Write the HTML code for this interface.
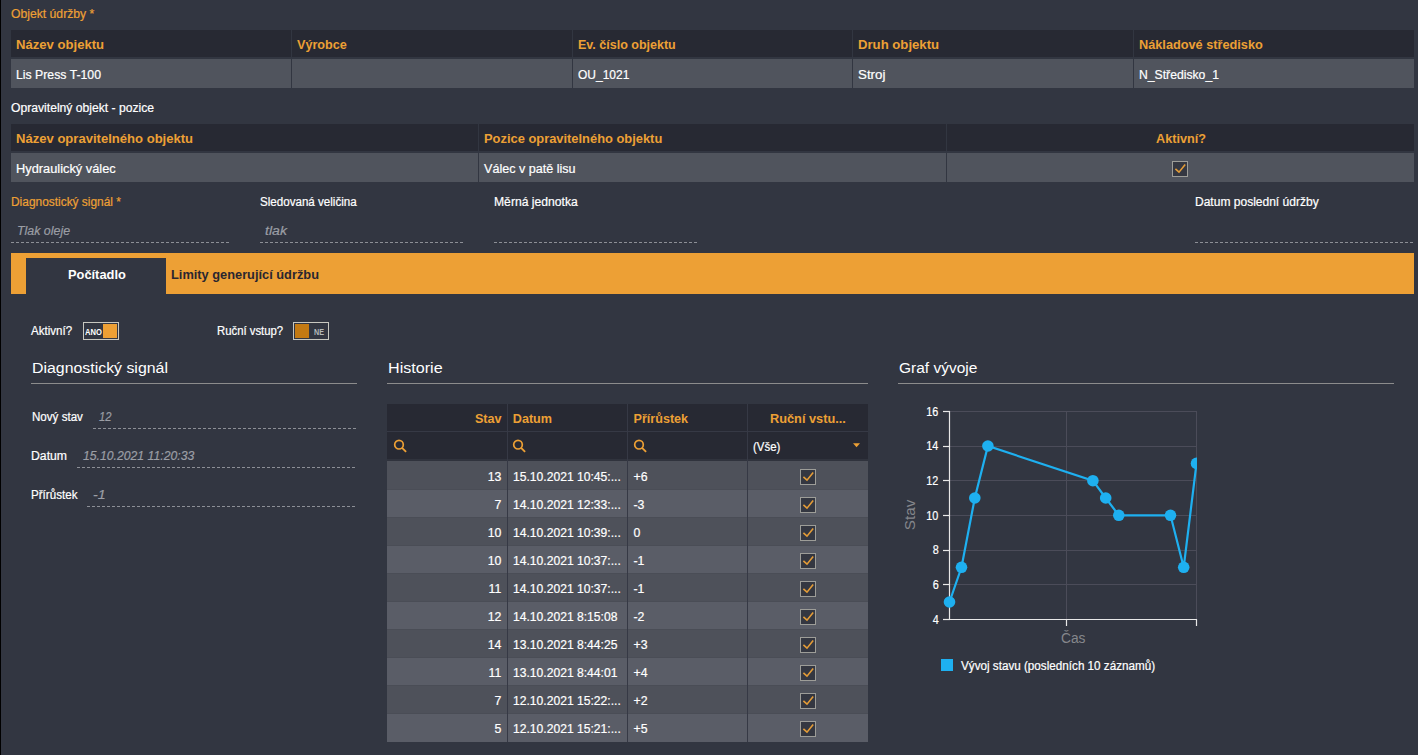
<!DOCTYPE html>
<html><head><meta charset="utf-8"><style>
html,body{margin:0;padding:0;}
body{width:1418px;height:755px;overflow:hidden;background:#323641;position:relative;font-family:"Liberation Sans",sans-serif;}
.t{position:absolute;white-space:nowrap;line-height:1;}
.r{position:absolute;}
</style></head><body>
<div class="r" style="left:0px;top:0px;width:1px;height:755px;background:#000;"></div>
<div id="t0" class="t" style="left:11px;transform-origin:0 0;transform:scaleX(0.9905);top:8.19px;font-size:12.3px;color:#eda035;font-weight:400;font-style:normal;-webkit-text-stroke:0.2px currentColor;">Objekt údržby *</div>
<div class="r" style="left:11px;top:30px;width:1403px;height:27px;background:#272933;"></div>
<div class="r" style="left:11px;top:59px;width:1403px;height:29px;background:#50545d;"></div>
<div class="r" style="left:291px;top:30px;width:1px;height:58px;background:#323641;"></div>
<div class="r" style="left:572px;top:30px;width:1px;height:58px;background:#323641;"></div>
<div class="r" style="left:852px;top:30px;width:1px;height:58px;background:#323641;"></div>
<div class="r" style="left:1133px;top:30px;width:1px;height:58px;background:#323641;"></div>
<div class="r" style="left:11px;top:57px;width:1403px;height:2px;background:#323641;"></div>
<div id="t1" class="t" style="left:16px;transform-origin:0 0;transform:scaleX(1.0405);top:39.13px;font-size:12.6px;color:#eda035;font-weight:700;font-style:normal;">Název objektu</div>
<div id="t2" class="t" style="left:297px;transform-origin:0 0;transform:scaleX(1.0000);top:39.13px;font-size:12.6px;color:#eda035;font-weight:700;font-style:normal;">Výrobce</div>
<div id="t3" class="t" style="left:578px;transform-origin:0 0;transform:scaleX(0.9929);top:39.13px;font-size:12.6px;color:#eda035;font-weight:700;font-style:normal;">Ev. číslo objektu</div>
<div id="t4" class="t" style="left:858px;transform-origin:0 0;transform:scaleX(1.0442);top:39.13px;font-size:12.6px;color:#eda035;font-weight:700;font-style:normal;">Druh objektu</div>
<div id="t5" class="t" style="left:1139px;transform-origin:0 0;transform:scaleX(1.0107);top:39.13px;font-size:12.6px;color:#eda035;font-weight:700;font-style:normal;">Nákladové středisko</div>
<div id="t6" class="t" style="left:16px;transform-origin:0 0;transform:scaleX(0.9976);top:69.19px;font-size:12.3px;color:#fff;font-weight:400;font-style:normal;-webkit-text-stroke:0.2px currentColor;">Lis Press T-100</div>
<div id="t7" class="t" style="left:578px;transform-origin:0 0;transform:scaleX(0.9750);top:69.19px;font-size:12.3px;color:#fff;font-weight:400;font-style:normal;-webkit-text-stroke:0.2px currentColor;">OU_1021</div>
<div id="t8" class="t" style="left:858px;transform-origin:0 0;transform:scaleX(1.0833);top:69.19px;font-size:12.3px;color:#fff;font-weight:400;font-style:normal;-webkit-text-stroke:0.2px currentColor;">Stroj</div>
<div id="t9" class="t" style="left:1139px;transform-origin:0 0;transform:scaleX(0.9911);top:69.19px;font-size:12.3px;color:#fff;font-weight:400;font-style:normal;-webkit-text-stroke:0.2px currentColor;">N_Středisko_1</div>
<div id="t10" class="t" style="left:11px;transform-origin:0 0;transform:scaleX(1.0121);top:102.34px;font-size:12.0px;color:#fff;font-weight:400;font-style:normal;-webkit-text-stroke:0.2px currentColor;">Opravitelný objekt - pozice</div>
<div class="r" style="left:11px;top:124px;width:1403px;height:27px;background:#272933;"></div>
<div class="r" style="left:11px;top:153px;width:1403px;height:29px;background:#50545d;"></div>
<div class="r" style="left:11px;top:151px;width:1403px;height:2px;background:#323641;"></div>
<div class="r" style="left:478px;top:124px;width:1px;height:58px;background:#323641;"></div>
<div class="r" style="left:946px;top:124px;width:1px;height:58px;background:#323641;"></div>
<div id="t11" class="t" style="left:16px;transform-origin:0 0;transform:scaleX(1.0371);top:133.13px;font-size:12.6px;color:#eda035;font-weight:700;font-style:normal;">Název opravitelného objektu</div>
<div id="t12" class="t" style="left:484px;transform-origin:0 0;transform:scaleX(1.0230);top:133.13px;font-size:12.6px;color:#eda035;font-weight:700;font-style:normal;">Pozice opravitelného objektu</div>
<div id="t13" class="t" style="left:1155.7px;transform-origin:0 0;transform:scaleX(1.0061);top:133.13px;font-size:12.6px;color:#eda035;font-weight:700;font-style:normal;">Aktivní?</div>
<div id="t14" class="t" style="left:16px;transform-origin:0 0;transform:scaleX(1.0421);top:163.19px;font-size:12.3px;color:#fff;font-weight:400;font-style:normal;-webkit-text-stroke:0.2px currentColor;">Hydraulický válec</div>
<div id="t15" class="t" style="left:484px;transform-origin:0 0;transform:scaleX(1.0225);top:163.19px;font-size:12.3px;color:#fff;font-weight:400;font-style:normal;-webkit-text-stroke:0.2px currentColor;">Válec v patě lisu</div>
<svg class="r" style="left:1172px;top:161px" width="16" height="16" viewBox="0 0 16 16"><rect x="0.5" y="0.5" width="15" height="15" fill="#343741" stroke="#9d9d98"/><path d="M3.4 7.8 L7 11.2 L13.2 3.6" fill="none" stroke="#e49c37" stroke-width="1.6"/></svg>
<div id="t16" class="t" style="left:11px;transform-origin:0 0;transform:scaleX(0.9690);top:196.19px;font-size:12.3px;color:#eda035;font-weight:400;font-style:normal;-webkit-text-stroke:0.2px currentColor;">Diagnostický signál *</div>
<div id="t17" class="t" style="left:260px;transform-origin:0 0;transform:scaleX(0.9431);top:196.19px;font-size:12.3px;color:#fff;font-weight:400;font-style:normal;-webkit-text-stroke:0.2px currentColor;">Sledovaná veličina</div>
<div id="t18" class="t" style="left:494px;transform-origin:0 0;transform:scaleX(0.9881);top:196.19px;font-size:12.3px;color:#fff;font-weight:400;font-style:normal;-webkit-text-stroke:0.2px currentColor;">Měrná jednotka</div>
<div id="t19" class="t" style="left:1195.4px;transform-origin:0 0;transform:scaleX(0.9778);top:196.19px;font-size:12.3px;color:#fff;font-weight:400;font-style:normal;-webkit-text-stroke:0.2px currentColor;">Datum poslední údržby</div>
<div id="t20" class="t" style="left:17px;transform-origin:0 0;transform:scaleX(1.0077);top:224.89px;font-size:12.3px;color:#9b9ea5;font-weight:400;font-style:italic;-webkit-text-stroke:0.2px currentColor;">Tlak oleje</div>
<div id="t21" class="t" style="left:264.5px;transform-origin:0 0;transform:scaleX(1.1474);top:224.89px;font-size:12.3px;color:#9b9ea5;font-weight:400;font-style:italic;-webkit-text-stroke:0.2px currentColor;">tlak</div>
<div class="r" style="left:11px;top:242px;width:219px;height:1px;background:repeating-linear-gradient(90deg,#8c8f96 0 3px,transparent 3px 5px);"></div>
<div class="r" style="left:260px;top:242px;width:204px;height:1px;background:repeating-linear-gradient(90deg,#8c8f96 0 3px,transparent 3px 5px);"></div>
<div class="r" style="left:494px;top:242px;width:203px;height:1px;background:repeating-linear-gradient(90deg,#8c8f96 0 3px,transparent 3px 5px);"></div>
<div class="r" style="left:1195px;top:242px;width:219px;height:1px;background:repeating-linear-gradient(90deg,#8c8f96 0 3px,transparent 3px 5px);"></div>
<div class="r" style="left:11px;top:253px;width:1403px;height:41px;background:#eda035;"></div>
<div class="r" style="left:26px;top:258px;width:140px;height:36px;background:#323641;"></div>
<div id="t22" class="t" style="left:67.7px;transform-origin:0 0;transform:scaleX(1.0196);top:268.53px;font-size:12.6px;color:#fff;font-weight:700;font-style:normal;">Počítadlo</div>
<div id="t23" class="t" style="left:170.6px;transform-origin:0 0;transform:scaleX(1.0166);top:268.53px;font-size:12.6px;color:#2a2630;font-weight:700;font-style:normal;">Limity generující údržbu</div>
<div id="t24" class="t" style="left:31.1px;transform-origin:0 0;transform:scaleX(0.9386);top:325.49px;font-size:12.3px;color:#fff;font-weight:400;font-style:normal;-webkit-text-stroke:0.2px currentColor;">Aktivní?</div>
<div class="r" style="left:83px;top:322px;width:36px;height:18px;background:transparent;box-sizing:border-box;border:1px solid #c8c8c0;"></div>
<div class="r" style="left:103px;top:324px;width:14px;height:14px;background:#eda035;"></div>
<div id="t25" class="t" style="left:85px;transform-origin:0 0;transform:scaleX(0.8947);top:327.70px;font-size:8.5px;color:#fff;font-weight:700;font-style:normal;">ANO</div>
<div id="t26" class="t" style="left:216.6px;transform-origin:0 0;transform:scaleX(0.9211);top:325.49px;font-size:12.3px;color:#fff;font-weight:400;font-style:normal;-webkit-text-stroke:0.2px currentColor;">Ruční vstup?</div>
<div class="r" style="left:293px;top:322px;width:36px;height:18px;background:transparent;box-sizing:border-box;border:1px solid #c8c8c0;"></div>
<div class="r" style="left:295px;top:324px;width:14px;height:14px;background:#c47a12;"></div>
<div id="t27" class="t" style="left:313.8px;transform-origin:0 0;transform:scaleX(0.8500);top:327.70px;font-size:8.5px;color:#b4baba;font-weight:700;font-style:normal;">NE</div>
<div id="t28" class="t" style="left:31.8px;transform-origin:0 0;transform:scaleX(1.0244);top:359.98px;font-size:15.5px;color:#fff;font-weight:400;font-style:normal;">Diagnostický signál</div>
<div id="t29" class="t" style="left:388px;transform-origin:0 0;transform:scaleX(1.0392);top:359.98px;font-size:15.5px;color:#fff;font-weight:400;font-style:normal;">Historie</div>
<div id="t30" class="t" style="left:898.5px;transform-origin:0 0;transform:scaleX(0.9987);top:359.98px;font-size:15.5px;color:#fff;font-weight:400;font-style:normal;">Graf vývoje</div>
<div class="r" style="left:31px;top:383px;width:326px;height:1px;background:#8c8c8c;"></div>
<div class="r" style="left:387px;top:383px;width:481px;height:1px;background:#8c8c8c;"></div>
<div class="r" style="left:898px;top:383px;width:496px;height:1px;background:#8c8c8c;"></div>
<div id="t31" class="t" style="left:31.6px;transform-origin:0 0;transform:scaleX(0.9426);top:411.09px;font-size:12.3px;color:#fff;font-weight:400;font-style:normal;-webkit-text-stroke:0.2px currentColor;">Nový stav</div>
<div id="t32" class="t" style="left:99.2px;transform-origin:0 0;transform:scaleX(0.9143);top:411.09px;font-size:12.3px;color:#9b9ea5;font-weight:400;font-style:italic;-webkit-text-stroke:0.2px currentColor;">12</div>
<div class="r" style="left:93px;top:428px;width:264px;height:1px;background:repeating-linear-gradient(90deg,#8c8f96 0 3px,transparent 3px 5px);"></div>
<div id="t33" class="t" style="left:31.4px;transform-origin:0 0;transform:scaleX(0.9943);top:449.89px;font-size:12.3px;color:#fff;font-weight:400;font-style:normal;-webkit-text-stroke:0.2px currentColor;">Datum</div>
<div id="t34" class="t" style="left:83.1px;transform-origin:0 0;transform:scaleX(0.9938);top:449.89px;font-size:12.3px;color:#9b9ea5;font-weight:400;font-style:italic;-webkit-text-stroke:0.2px currentColor;">15.10.2021 11:20:33</div>
<div class="r" style="left:77px;top:467px;width:280px;height:1px;background:repeating-linear-gradient(90deg,#8c8f96 0 3px,transparent 3px 5px);"></div>
<div id="t35" class="t" style="left:31.4px;transform-origin:0 0;transform:scaleX(0.9449);top:488.89px;font-size:12.3px;color:#fff;font-weight:400;font-style:normal;-webkit-text-stroke:0.2px currentColor;">Přírůstek</div>
<div id="t36" class="t" style="left:92.5px;transform-origin:0 0;transform:scaleX(1.1500);top:488.89px;font-size:12.3px;color:#9b9ea5;font-weight:400;font-style:italic;-webkit-text-stroke:0.2px currentColor;">-1</div>
<div class="r" style="left:87px;top:506px;width:270px;height:1px;background:repeating-linear-gradient(90deg,#8c8f96 0 3px,transparent 3px 5px);"></div>
<div class="r" style="left:387px;top:404px;width:481px;height:55px;background:#272933;"></div>
<div class="r" style="left:387px;top:431px;width:481px;height:1px;background:#363945;"></div>
<div class="r" style="left:387px;top:459px;width:481px;height:2px;background:#30333d;"></div>
<div class="r" style="left:387px;top:461px;width:481px;height:29px;background:#4e515a;"></div>
<div class="r" style="left:387px;top:490px;width:481px;height:28px;background:#5a5d67;"></div>
<div class="r" style="left:387px;top:489px;width:481px;height:1px;background:#4a4d56;"></div>
<div class="r" style="left:387px;top:518px;width:481px;height:28px;background:#4e515a;"></div>
<div class="r" style="left:387px;top:517px;width:481px;height:1px;background:#4a4d56;"></div>
<div class="r" style="left:387px;top:546px;width:481px;height:28px;background:#5a5d67;"></div>
<div class="r" style="left:387px;top:545px;width:481px;height:1px;background:#4a4d56;"></div>
<div class="r" style="left:387px;top:574px;width:481px;height:28px;background:#4e515a;"></div>
<div class="r" style="left:387px;top:573px;width:481px;height:1px;background:#4a4d56;"></div>
<div class="r" style="left:387px;top:602px;width:481px;height:28px;background:#5a5d67;"></div>
<div class="r" style="left:387px;top:601px;width:481px;height:1px;background:#4a4d56;"></div>
<div class="r" style="left:387px;top:630px;width:481px;height:28px;background:#4e515a;"></div>
<div class="r" style="left:387px;top:629px;width:481px;height:1px;background:#4a4d56;"></div>
<div class="r" style="left:387px;top:658px;width:481px;height:28px;background:#5a5d67;"></div>
<div class="r" style="left:387px;top:657px;width:481px;height:1px;background:#4a4d56;"></div>
<div class="r" style="left:387px;top:686px;width:481px;height:28px;background:#4e515a;"></div>
<div class="r" style="left:387px;top:685px;width:481px;height:1px;background:#4a4d56;"></div>
<div class="r" style="left:387px;top:714px;width:481px;height:28px;background:#5a5d67;"></div>
<div class="r" style="left:387px;top:713px;width:481px;height:1px;background:#4a4d56;"></div>
<div id="t37" class="t" style="right:916.7px;transform-origin:100% 0;transform:scaleX(1.0000);top:470.99px;font-size:12.3px;color:#fff;font-weight:400;font-style:normal;-webkit-text-stroke:0.2px currentColor;">13</div>
<div id="t38" class="t" style="left:513.3px;transform-origin:0 0;transform:scaleX(1.0000);top:470.99px;font-size:12.3px;color:#fff;font-weight:400;font-style:normal;-webkit-text-stroke:0.2px currentColor;transform:scaleX(0.985);">15.10.2021 10:45:...</div>
<div id="t39" class="t" style="left:633.5px;transform-origin:0 0;transform:scaleX(1.0000);top:470.99px;font-size:12.3px;color:#fff;font-weight:400;font-style:normal;-webkit-text-stroke:0.2px currentColor;">+6</div>
<svg class="r" style="left:800px;top:469px" width="16" height="16" viewBox="0 0 16 16"><rect x="0.5" y="0.5" width="15" height="15" fill="#343741" stroke="#9d9d98"/><path d="M3.4 7.8 L7 11.2 L13.2 3.6" fill="none" stroke="#e49c37" stroke-width="1.6"/></svg>
<div id="t40" class="t" style="right:916.7px;transform-origin:100% 0;transform:scaleX(1.0000);top:498.99px;font-size:12.3px;color:#fff;font-weight:400;font-style:normal;-webkit-text-stroke:0.2px currentColor;">7</div>
<div id="t41" class="t" style="left:513.3px;transform-origin:0 0;transform:scaleX(1.0000);top:498.99px;font-size:12.3px;color:#fff;font-weight:400;font-style:normal;-webkit-text-stroke:0.2px currentColor;transform:scaleX(0.985);">14.10.2021 12:33:...</div>
<div id="t42" class="t" style="left:633.5px;transform-origin:0 0;transform:scaleX(1.0000);top:498.99px;font-size:12.3px;color:#fff;font-weight:400;font-style:normal;-webkit-text-stroke:0.2px currentColor;">-3</div>
<svg class="r" style="left:800px;top:497px" width="16" height="16" viewBox="0 0 16 16"><rect x="0.5" y="0.5" width="15" height="15" fill="#343741" stroke="#9d9d98"/><path d="M3.4 7.8 L7 11.2 L13.2 3.6" fill="none" stroke="#e49c37" stroke-width="1.6"/></svg>
<div id="t43" class="t" style="right:916.7px;transform-origin:100% 0;transform:scaleX(1.0000);top:526.99px;font-size:12.3px;color:#fff;font-weight:400;font-style:normal;-webkit-text-stroke:0.2px currentColor;">10</div>
<div id="t44" class="t" style="left:513.3px;transform-origin:0 0;transform:scaleX(1.0000);top:526.99px;font-size:12.3px;color:#fff;font-weight:400;font-style:normal;-webkit-text-stroke:0.2px currentColor;transform:scaleX(0.985);">14.10.2021 10:39:...</div>
<div id="t45" class="t" style="left:633.5px;transform-origin:0 0;transform:scaleX(1.0000);top:526.99px;font-size:12.3px;color:#fff;font-weight:400;font-style:normal;-webkit-text-stroke:0.2px currentColor;">0</div>
<svg class="r" style="left:800px;top:525px" width="16" height="16" viewBox="0 0 16 16"><rect x="0.5" y="0.5" width="15" height="15" fill="#343741" stroke="#9d9d98"/><path d="M3.4 7.8 L7 11.2 L13.2 3.6" fill="none" stroke="#e49c37" stroke-width="1.6"/></svg>
<div id="t46" class="t" style="right:916.7px;transform-origin:100% 0;transform:scaleX(1.0000);top:554.99px;font-size:12.3px;color:#fff;font-weight:400;font-style:normal;-webkit-text-stroke:0.2px currentColor;">10</div>
<div id="t47" class="t" style="left:513.3px;transform-origin:0 0;transform:scaleX(1.0000);top:554.99px;font-size:12.3px;color:#fff;font-weight:400;font-style:normal;-webkit-text-stroke:0.2px currentColor;transform:scaleX(0.985);">14.10.2021 10:37:...</div>
<div id="t48" class="t" style="left:633.5px;transform-origin:0 0;transform:scaleX(1.0000);top:554.99px;font-size:12.3px;color:#fff;font-weight:400;font-style:normal;-webkit-text-stroke:0.2px currentColor;">-1</div>
<svg class="r" style="left:800px;top:553px" width="16" height="16" viewBox="0 0 16 16"><rect x="0.5" y="0.5" width="15" height="15" fill="#343741" stroke="#9d9d98"/><path d="M3.4 7.8 L7 11.2 L13.2 3.6" fill="none" stroke="#e49c37" stroke-width="1.6"/></svg>
<div id="t49" class="t" style="right:916.7px;transform-origin:100% 0;transform:scaleX(1.0000);top:582.99px;font-size:12.3px;color:#fff;font-weight:400;font-style:normal;-webkit-text-stroke:0.2px currentColor;">11</div>
<div id="t50" class="t" style="left:513.3px;transform-origin:0 0;transform:scaleX(1.0000);top:582.99px;font-size:12.3px;color:#fff;font-weight:400;font-style:normal;-webkit-text-stroke:0.2px currentColor;transform:scaleX(0.985);">14.10.2021 10:37:...</div>
<div id="t51" class="t" style="left:633.5px;transform-origin:0 0;transform:scaleX(1.0000);top:582.99px;font-size:12.3px;color:#fff;font-weight:400;font-style:normal;-webkit-text-stroke:0.2px currentColor;">-1</div>
<svg class="r" style="left:800px;top:581px" width="16" height="16" viewBox="0 0 16 16"><rect x="0.5" y="0.5" width="15" height="15" fill="#343741" stroke="#9d9d98"/><path d="M3.4 7.8 L7 11.2 L13.2 3.6" fill="none" stroke="#e49c37" stroke-width="1.6"/></svg>
<div id="t52" class="t" style="right:916.7px;transform-origin:100% 0;transform:scaleX(1.0000);top:610.99px;font-size:12.3px;color:#fff;font-weight:400;font-style:normal;-webkit-text-stroke:0.2px currentColor;">12</div>
<div id="t53" class="t" style="left:513.3px;transform-origin:0 0;transform:scaleX(1.0000);top:610.99px;font-size:12.3px;color:#fff;font-weight:400;font-style:normal;-webkit-text-stroke:0.2px currentColor;transform:scaleX(0.985);">14.10.2021 8:15:08</div>
<div id="t54" class="t" style="left:633.5px;transform-origin:0 0;transform:scaleX(1.0000);top:610.99px;font-size:12.3px;color:#fff;font-weight:400;font-style:normal;-webkit-text-stroke:0.2px currentColor;">-2</div>
<svg class="r" style="left:800px;top:609px" width="16" height="16" viewBox="0 0 16 16"><rect x="0.5" y="0.5" width="15" height="15" fill="#343741" stroke="#9d9d98"/><path d="M3.4 7.8 L7 11.2 L13.2 3.6" fill="none" stroke="#e49c37" stroke-width="1.6"/></svg>
<div id="t55" class="t" style="right:916.7px;transform-origin:100% 0;transform:scaleX(1.0000);top:638.99px;font-size:12.3px;color:#fff;font-weight:400;font-style:normal;-webkit-text-stroke:0.2px currentColor;">14</div>
<div id="t56" class="t" style="left:513.3px;transform-origin:0 0;transform:scaleX(1.0000);top:638.99px;font-size:12.3px;color:#fff;font-weight:400;font-style:normal;-webkit-text-stroke:0.2px currentColor;transform:scaleX(0.985);">13.10.2021 8:44:25</div>
<div id="t57" class="t" style="left:633.5px;transform-origin:0 0;transform:scaleX(1.0000);top:638.99px;font-size:12.3px;color:#fff;font-weight:400;font-style:normal;-webkit-text-stroke:0.2px currentColor;">+3</div>
<svg class="r" style="left:800px;top:637px" width="16" height="16" viewBox="0 0 16 16"><rect x="0.5" y="0.5" width="15" height="15" fill="#343741" stroke="#9d9d98"/><path d="M3.4 7.8 L7 11.2 L13.2 3.6" fill="none" stroke="#e49c37" stroke-width="1.6"/></svg>
<div id="t58" class="t" style="right:916.7px;transform-origin:100% 0;transform:scaleX(1.0000);top:666.99px;font-size:12.3px;color:#fff;font-weight:400;font-style:normal;-webkit-text-stroke:0.2px currentColor;">11</div>
<div id="t59" class="t" style="left:513.3px;transform-origin:0 0;transform:scaleX(1.0000);top:666.99px;font-size:12.3px;color:#fff;font-weight:400;font-style:normal;-webkit-text-stroke:0.2px currentColor;transform:scaleX(0.985);">13.10.2021 8:44:01</div>
<div id="t60" class="t" style="left:633.5px;transform-origin:0 0;transform:scaleX(1.0000);top:666.99px;font-size:12.3px;color:#fff;font-weight:400;font-style:normal;-webkit-text-stroke:0.2px currentColor;">+4</div>
<svg class="r" style="left:800px;top:665px" width="16" height="16" viewBox="0 0 16 16"><rect x="0.5" y="0.5" width="15" height="15" fill="#343741" stroke="#9d9d98"/><path d="M3.4 7.8 L7 11.2 L13.2 3.6" fill="none" stroke="#e49c37" stroke-width="1.6"/></svg>
<div id="t61" class="t" style="right:916.7px;transform-origin:100% 0;transform:scaleX(1.0000);top:694.99px;font-size:12.3px;color:#fff;font-weight:400;font-style:normal;-webkit-text-stroke:0.2px currentColor;">7</div>
<div id="t62" class="t" style="left:513.3px;transform-origin:0 0;transform:scaleX(1.0000);top:694.99px;font-size:12.3px;color:#fff;font-weight:400;font-style:normal;-webkit-text-stroke:0.2px currentColor;transform:scaleX(0.985);">12.10.2021 15:22:...</div>
<div id="t63" class="t" style="left:633.5px;transform-origin:0 0;transform:scaleX(1.0000);top:694.99px;font-size:12.3px;color:#fff;font-weight:400;font-style:normal;-webkit-text-stroke:0.2px currentColor;">+2</div>
<svg class="r" style="left:800px;top:693px" width="16" height="16" viewBox="0 0 16 16"><rect x="0.5" y="0.5" width="15" height="15" fill="#343741" stroke="#9d9d98"/><path d="M3.4 7.8 L7 11.2 L13.2 3.6" fill="none" stroke="#e49c37" stroke-width="1.6"/></svg>
<div id="t64" class="t" style="right:916.7px;transform-origin:100% 0;transform:scaleX(1.0000);top:722.99px;font-size:12.3px;color:#fff;font-weight:400;font-style:normal;-webkit-text-stroke:0.2px currentColor;">5</div>
<div id="t65" class="t" style="left:513.3px;transform-origin:0 0;transform:scaleX(1.0000);top:722.99px;font-size:12.3px;color:#fff;font-weight:400;font-style:normal;-webkit-text-stroke:0.2px currentColor;transform:scaleX(0.985);">12.10.2021 15:21:...</div>
<div id="t66" class="t" style="left:633.5px;transform-origin:0 0;transform:scaleX(1.0000);top:722.99px;font-size:12.3px;color:#fff;font-weight:400;font-style:normal;-webkit-text-stroke:0.2px currentColor;">+5</div>
<svg class="r" style="left:800px;top:721px" width="16" height="16" viewBox="0 0 16 16"><rect x="0.5" y="0.5" width="15" height="15" fill="#343741" stroke="#9d9d98"/><path d="M3.4 7.8 L7 11.2 L13.2 3.6" fill="none" stroke="#e49c37" stroke-width="1.6"/></svg>
<div class="r" style="left:507px;top:404px;width:1px;height:338px;background:#363945;"></div>
<div class="r" style="left:627px;top:404px;width:1px;height:338px;background:#363945;"></div>
<div class="r" style="left:747px;top:404px;width:1px;height:338px;background:#363945;"></div>
<div id="t67" class="t" style="right:916.5px;transform-origin:100% 0;transform:scaleX(1.0000);top:413.33px;font-size:12.6px;color:#eda035;font-weight:700;font-style:normal;">Stav</div>
<div id="t68" class="t" style="left:512.8px;transform-origin:0 0;transform:scaleX(1.0000);top:413.33px;font-size:12.6px;color:#eda035;font-weight:700;font-style:normal;">Datum</div>
<div id="t69" class="t" style="left:633.5px;transform-origin:0 0;transform:scaleX(1.0000);top:413.33px;font-size:12.6px;color:#eda035;font-weight:700;font-style:normal;">Přírůstek</div>
<div id="t70" class="t" style="left:770px;transform-origin:0 0;transform:scaleX(1.0135);top:413.33px;font-size:12.6px;color:#eda035;font-weight:700;font-style:normal;">Ruční vstu...</div>
<svg class="r" style="left:393px;top:439px" width="15" height="15" viewBox="0 0 15 15"><circle cx="6" cy="5.7" r="4.3" fill="none" stroke="#eda035" stroke-width="1.7"/><path d="M9.1 8.8 L13.1 12.8" stroke="#eda035" stroke-width="1.9"/></svg>
<svg class="r" style="left:512px;top:439px" width="15" height="15" viewBox="0 0 15 15"><circle cx="6" cy="5.7" r="4.3" fill="none" stroke="#eda035" stroke-width="1.7"/><path d="M9.1 8.8 L13.1 12.8" stroke="#eda035" stroke-width="1.9"/></svg>
<svg class="r" style="left:633px;top:439px" width="15" height="15" viewBox="0 0 15 15"><circle cx="6" cy="5.7" r="4.3" fill="none" stroke="#eda035" stroke-width="1.7"/><path d="M9.1 8.8 L13.1 12.8" stroke="#eda035" stroke-width="1.9"/></svg>
<div id="t71" class="t" style="left:753px;transform-origin:0 0;transform:scaleX(0.9310);top:440.89px;font-size:12.3px;color:#fff;font-weight:400;font-style:normal;-webkit-text-stroke:0.2px currentColor;">(Vše)</div>
<svg class="r" style="left:853px;top:443px" width="7" height="5" viewBox="0 0 7 5"><path d="M0 0.2 L7 0.2 L3.5 4.2z" fill="#eda035"/></svg>
<svg class="r" style="left:0;top:0" width="1418" height="755" viewBox="0 0 1418 755"><defs><clipPath id="pc"><rect x="900" y="380" width="297" height="260"/></clipPath></defs><line x1="949" x2="1197" y1="584.5" y2="584.5" stroke="#4b4c59" stroke-width="1"/><line x1="949" x2="1197" y1="550.5" y2="550.5" stroke="#4b4c59" stroke-width="1"/><line x1="949" x2="1197" y1="515.5" y2="515.5" stroke="#4b4c59" stroke-width="1"/><line x1="949" x2="1197" y1="480.5" y2="480.5" stroke="#4b4c59" stroke-width="1"/><line x1="949" x2="1197" y1="446.5" y2="446.5" stroke="#4b4c59" stroke-width="1"/><line x1="949" x2="1197" y1="411.5" y2="411.5" stroke="#4b4c59" stroke-width="1"/><line x1="1066.5" x2="1066.5" y1="411" y2="619" stroke="#4b4c59" stroke-width="1"/><line x1="1196.5" x2="1196.5" y1="411" y2="619" stroke="#4b4c59" stroke-width="1"/><line x1="949.5" x2="949.5" y1="411" y2="620" stroke="#e8e8e8" stroke-width="1.2"/><line x1="943" x2="1197" y1="619.5" y2="619.5" stroke="#e8e8e8" stroke-width="1.2"/><line x1="943" x2="950" y1="619.5" y2="619.5" stroke="#e8e8e8" stroke-width="1.2"/><line x1="943" x2="950" y1="584.5" y2="584.5" stroke="#e8e8e8" stroke-width="1.2"/><line x1="943" x2="950" y1="550.5" y2="550.5" stroke="#e8e8e8" stroke-width="1.2"/><line x1="943" x2="950" y1="515.5" y2="515.5" stroke="#e8e8e8" stroke-width="1.2"/><line x1="943" x2="950" y1="480.5" y2="480.5" stroke="#e8e8e8" stroke-width="1.2"/><line x1="943" x2="950" y1="446.5" y2="446.5" stroke="#e8e8e8" stroke-width="1.2"/><line x1="943" x2="950" y1="411.5" y2="411.5" stroke="#e8e8e8" stroke-width="1.2"/><line x1="1066.5" x2="1066.5" y1="619" y2="626" stroke="#e8e8e8" stroke-width="1.2"/><line x1="1196.5" x2="1196.5" y1="619" y2="626" stroke="#e8e8e8" stroke-width="1.2"/><g clip-path="url(#pc)"><path d="M949.5,602.0 L961.5,567.3 L974.8,498.0 L987.9,446.0 L1092.9,480.7 L1105.7,498.0 L1118.8,515.3 L1170.5,515.3 L1183.7,567.3 L1196.5,463.4" fill="none" stroke="#1eb0f0" stroke-width="2.2"/><circle cx="949.5" cy="602.0" r="5.8" fill="#1eb0f0"/><circle cx="961.5" cy="567.3" r="5.8" fill="#1eb0f0"/><circle cx="974.8" cy="498.0" r="5.8" fill="#1eb0f0"/><circle cx="987.9" cy="446.0" r="5.8" fill="#1eb0f0"/><circle cx="1092.9" cy="480.7" r="5.8" fill="#1eb0f0"/><circle cx="1105.7" cy="498.0" r="5.8" fill="#1eb0f0"/><circle cx="1118.8" cy="515.3" r="5.8" fill="#1eb0f0"/><circle cx="1170.5" cy="515.3" r="5.8" fill="#1eb0f0"/><circle cx="1183.7" cy="567.3" r="5.8" fill="#1eb0f0"/><circle cx="1196.5" cy="463.4" r="5.8" fill="#1eb0f0"/></g></svg>
<div id="t72" class="t" style="right:479.4px;transform-origin:100% 0;transform:scaleX(1.0000);top:613.74px;font-size:12px;color:#fff;font-weight:400;font-style:normal;-webkit-text-stroke:0.2px currentColor;transform-origin:100% 0;transform:scaleX(0.9);">4</div>
<div id="t73" class="t" style="right:479.4px;transform-origin:100% 0;transform:scaleX(1.0000);top:579.09px;font-size:12px;color:#fff;font-weight:400;font-style:normal;-webkit-text-stroke:0.2px currentColor;transform-origin:100% 0;transform:scaleX(0.9);">6</div>
<div id="t74" class="t" style="right:479.4px;transform-origin:100% 0;transform:scaleX(1.0000);top:544.44px;font-size:12px;color:#fff;font-weight:400;font-style:normal;-webkit-text-stroke:0.2px currentColor;transform-origin:100% 0;transform:scaleX(0.9);">8</div>
<div id="t75" class="t" style="right:479.4px;transform-origin:100% 0;transform:scaleX(1.0000);top:509.79px;font-size:12px;color:#fff;font-weight:400;font-style:normal;-webkit-text-stroke:0.2px currentColor;transform-origin:100% 0;transform:scaleX(0.9);">10</div>
<div id="t76" class="t" style="right:479.4px;transform-origin:100% 0;transform:scaleX(1.0000);top:475.14px;font-size:12px;color:#fff;font-weight:400;font-style:normal;-webkit-text-stroke:0.2px currentColor;transform-origin:100% 0;transform:scaleX(0.9);">12</div>
<div id="t77" class="t" style="right:479.4px;transform-origin:100% 0;transform:scaleX(1.0000);top:440.49px;font-size:12px;color:#fff;font-weight:400;font-style:normal;-webkit-text-stroke:0.2px currentColor;transform-origin:100% 0;transform:scaleX(0.9);">14</div>
<div id="t78" class="t" style="right:479.4px;transform-origin:100% 0;transform:scaleX(1.0000);top:405.84px;font-size:12px;color:#fff;font-weight:400;font-style:normal;-webkit-text-stroke:0.2px currentColor;transform-origin:100% 0;transform:scaleX(0.9);">16</div>
<div id="t79" class="t" style="left:1061px;transform-origin:0 0;transform:scaleX(0.9000);top:629.95px;font-size:15.3px;color:#85878c;font-weight:400;font-style:normal;-webkit-text-stroke:0;">Čas</div>
<div class="t" style="left:910px;top:515px;font-size:15.3px;color:#85878c;transform:translate(-50%,-50%) rotate(-90deg);line-height:1">Stav</div>
<div class="r" style="left:941px;top:659px;width:12px;height:12px;background:#1eb0f0;"></div>
<div id="t80" class="t" style="left:961.2px;transform-origin:0 0;transform:scaleX(0.9500);top:660.29px;font-size:12.3px;color:#fff;font-weight:400;font-style:normal;-webkit-text-stroke:0.2px currentColor;">Vývoj stavu (posledních 10 záznamů)</div>
</body></html>
